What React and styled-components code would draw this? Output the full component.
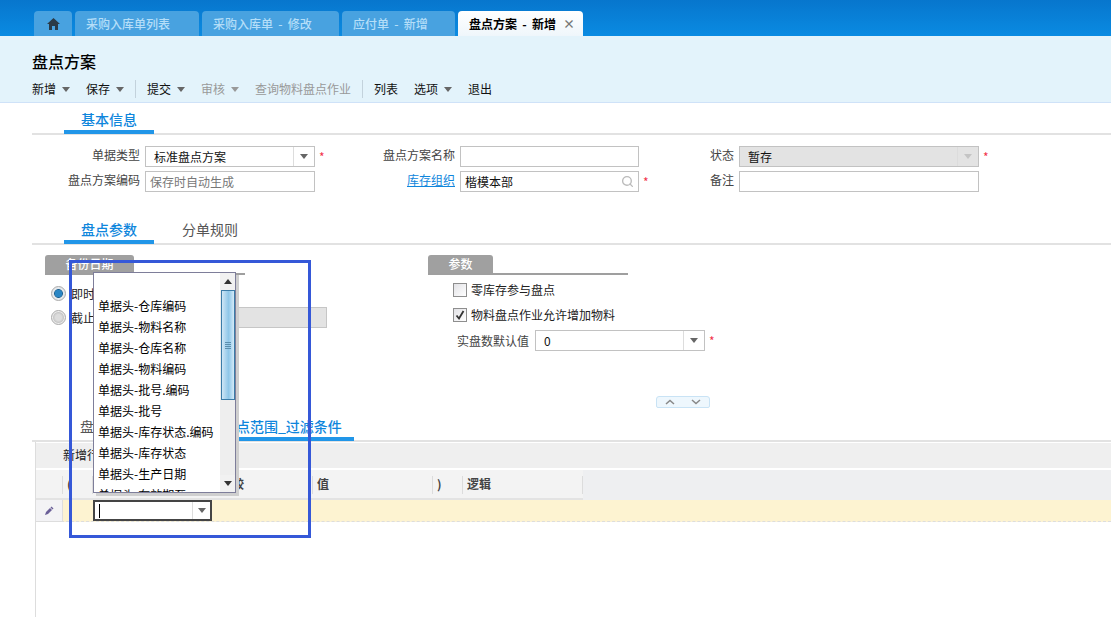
import React from 'react';
import styled, { createGlobalStyle } from 'styled-components';
import { Search } from 'lucide-react';

const Global = createGlobalStyle`
  html, body { margin: 0; padding: 0; background: #fff; }
  body { font-family: "Noto Sans CJK SC", "Liberation Sans", sans-serif; font-size: 12px; color: #333; }
`;
const Page = styled.div`position: relative; width: 1111px; height: 617px; overflow: hidden; display: flex; flex-direction: column; background: #fff;`;
const TabBar = styled.div`height: 36px; flex: none; display: flex; align-items: flex-end; gap: 3px; padding-left: 34px; box-sizing: border-box; background: linear-gradient(#0776cd, #0a8be2);`;
const PageTab = styled.div`
  width: ${p => p.$w}px; height: 25px; display: flex; align-items: center; box-sizing: border-box; padding: 0 0 0 11px; white-space: pre; word-spacing: 2.5px;
  border-radius: 4px 4px 0 0; background: #48a2e0; color: #b5def8; line-height: 25px; font-weight: 500;
`;
const HomeTab = styled(PageTab)`padding: 0; justify-content: center;`;
const ActiveTab = styled(PageTab)`background: linear-gradient(#fff, #eff6fb); color: #000; padding-right: 8px; font-weight: 700;`;
const CloseMark = styled.span`margin-left: auto; color: #777; font-size: 12px; font-weight: 700;`;
const Head = styled.header`height: 67px; flex: none; box-sizing: border-box; background: #e3f3fb; border-bottom: 1px solid #cfe2f8; padding: 15px 0 0 32px;`;
const Title = styled.h1`margin: 0; font-size: 16px; line-height: 20px; font-weight: 500; color: #000;`;
const Toolbar = styled.div`display: flex; align-items: center; gap: 16px; margin-top: 8px; height: 20px;`;
const ToolItem = styled.div`display: flex; align-items: center; gap: 6px; color: ${p => (p.$off ? '#999' : '#111')}; line-height: 20px;`;
const ToolSep = styled.i`width: 1px; height: 18px; background: #c3d2dc; margin: 0 -5px;`;
const Caret = styled.i`width: 0; height: 0; flex: none; border: 4px solid transparent; border-top: 5px solid ${p => p.$color || '#666'}; border-bottom: 0; display: block;`;
const Tabs = styled.div`flex: none; display: flex; align-items: flex-end; box-sizing: border-box; height: ${p => p.$h}px; margin: ${p => p.$mt}px 0 0 32px; padding-left: ${p => p.$pl ?? 32}px; border-bottom: 2px solid #e2e2e2;`;
const SecTab = styled.div`
  width: ${p => p.$w}px; height: 26px; box-sizing: border-box; text-align: ${p => p.$align || 'center'}; padding-left: ${p => p.$pad || 0}px; line-height: 22px; font-size: 14px; margin-bottom: -1px;
  color: ${p => (p.$active ? '#0f86dc' : '#555')}; font-weight: ${p => (p.$active ? 500 : 400)};
  border-bottom: 4px solid ${p => (p.$active ? '#2196e8' : 'transparent')}; white-space: nowrap;
`;
const FormGrid = styled.div`flex: none; display: grid; grid-template-columns: 140px 170px 135px 179px 90px 240px; grid-auto-rows: 21px; column-gap: 5px; row-gap: 4px; margin-top: 11px; height: 46px;`;
const Label = styled.label`text-align: right; line-height: 18px; color: ${p => (p.$link ? '#0f86dc' : '#444')}; text-decoration: ${p => (p.$link ? 'underline' : 'none')};`;
const Input = styled.div`
  position: relative; display: flex; align-items: center; box-sizing: border-box; height: 21px; border: 1px solid #c2c2c2; padding-left: ${p => p.$pad || 8}px; flex: none;
  ${p => (p.$w ? `width: ${p.$w}px;` : '')}
  background: ${p => (p.$off ? '#e3e3e3' : '#fff')}; color: ${p => (p.$hint ? '#777' : '#111')};
`;
const Star = styled.span`position: absolute; left: calc(100% + 5px); top: 0; color: #f2334b; font-size: 12px; line-height: 20px;`;
const DropBtn = styled.span`margin-left: auto; width: 20px; height: 100%; border-left: 1px solid ${p => (p.$off ? '#dcdcdc' : '#ddd')}; display: flex; align-items: center; justify-content: center;`;
const SearchBtn = styled.span`margin-left: auto; width: 22px; display: flex; justify-content: center; color: #bbb;`;
const Params = styled.div`flex: none; height: 141px; margin-top: 10px; display: flex;`;
const Group = styled.section`width: 200px; margin-left: ${p => p.$ml}px; display: flex; flex-direction: column;`;
const GroupHead = styled.div`height: 18px; box-sizing: content-box; border-bottom: 2px solid #9f9f9f;`;
const GroupLabel = styled.div`width: ${p => p.$w}px; height: 18px; background: #a0a0a0; border-radius: 3px 3px 0 0; color: #fff; text-align: center; line-height: 18px; font-weight: 500;`;
const RadioLine = styled.div`display: flex; align-items: center; height: 24px; margin-left: 6px; gap: 5px; color: #222; white-space: nowrap;`;
const RadioList = styled.div`margin-top: 6px; display: flex; flex-direction: column;`;
const Radio = styled.i`width: 15px; height: 15px; box-sizing: border-box; border-radius: 50%; flex: none; border: 1px solid #aaa; background: ${p => (p.$on ? 'radial-gradient(circle, #2a86c4 0 3.5px, #1c5f8f 4px, #e4e8ec 4.8px)' : 'radial-gradient(circle, #dcdcdc 0 3px, #c8c8c8 5px, #eee 6px)')};`;
const DisabledDate = styled.div`flex: none; width: 230px; height: 21px; box-sizing: border-box; background: #e3e3e3; border: 1px solid #c6c6c6; margin-left: -3px;`;
const CheckList = styled.div`margin: 7px 0 0 25px; display: flex; flex-direction: column; gap: 10px; width: 300px;`;
const CheckLine = styled.div`display: flex; align-items: center; gap: 4px; height: 15px; color: #222; white-space: nowrap;`;
const Check = styled.i`width: 14px; height: 14px; box-sizing: border-box; border: 1px solid #8e8e8e; background: linear-gradient(135deg, #e2e2e6, #fff); display: flex; align-items: center; justify-content: center;`;
const DefaultRow = styled.div`display: flex; align-items: center; gap: 6px; margin: 8px 0 0 29px; white-space: nowrap; color: #444;`;
const CollapseRow = styled.div`flex: none; height: 12px; padding-left: 656px;`;
const Collapse = styled.div`width: 54px; height: 12px; box-sizing: border-box; border: 1px solid #c9e3f5; border-radius: 3px 3px 2px 2px; background: #eef7fd; display: flex; align-items: center; justify-content: space-around; color: #888;`;
const GridArea = styled.div`flex: 1; margin-left: 35px; border-left: 1px solid #ddd; display: flex; flex-direction: column;`;
const GridTools = styled.div`height: 25px; margin-top: 1px; background: #efefef; line-height: 24px; padding-left: 27px; color: #222; flex: none;`;
const GridHead = styled.div`height: 30px; margin-top: 2px; flex: none; display: flex; background: #eeeff1;`;
const HeadCell = styled.div`width: ${p => p.$w}px; box-sizing: border-box; background: #f3f3f3; border-bottom: 2px solid #e3e3e3; font-weight: 700; line-height: 28px; padding-left: 4px; color: #444; position: relative; &::after { content: ""; position: absolute; right: 0; top: 6px; height: 18px; width: 1px; background: #dcdcdc; }`;
const GridRow = styled.div`height: 22px; flex: none; display: flex; background: #fdf3d1; border-bottom: 1px dashed #ddd; box-sizing: border-box;`;
const RowMark = styled.div`width: 27px; background: #f3f3f5; border-right: 1px solid #ddd; border-bottom: 1px solid #ddd; box-sizing: border-box; display: flex; align-items: center; justify-content: center; height: 22px;`;
const CellEditor = styled.div`position: absolute; left: 93px; top: 500px; width: 119px; height: 21px; box-sizing: border-box; border: 2px solid #444; background: #fff; display: flex; align-items: center; padding-left: 4px;`;
const Cursor = styled.i`width: 1px; height: 14px; background: #000;`;
const EditorBtn = styled.span`margin-left: auto; width: 17px; height: 100%; border-left: 1px solid #ddd; display: flex; align-items: center; justify-content: center;`;
const Popup = styled.div`position: absolute; left: 93px; top: 272px; width: 143px; height: 221px; box-sizing: border-box; background: #fff; border: 1px solid #7e7e9a; box-shadow: 3px 3px 0 #cfcfcf; display: flex; overflow: hidden;`;
const PopupList = styled.div`flex: 1; padding: 22px 0 0 4px; overflow: hidden;`;
const PopupItem = styled.div`height: 21px; line-height: 21px; color: #000; white-space: nowrap;`;
const Scroll = styled.div`width: 15px; flex: none; background: #eee; display: flex; flex-direction: column; align-items: center; position: relative;`;
const ScrollBtn = styled.div`height: 17px; width: 100%; display: flex; align-items: center; justify-content: center; background: #f1f1f1; &:last-child { margin-top: auto; }`;
const Thumb = styled.div`width: 14px; height: 110px; box-sizing: border-box; border: 1px solid #3b7ca8; background: linear-gradient(90deg, #cfe6f5, #8ec6e8 55%, #d5ebf8); display: flex; align-items: center; justify-content: center;`;
const Grip = styled.div`width: 6px; height: 7px; background: repeating-linear-gradient(#5b8fae 0 1px, transparent 1px 2px);`;
const UpCaret = styled.i`width: 0; height: 0; border: 4px solid transparent; border-bottom: 5px solid #333; border-top: 0; display: block;`;
const Annotation = styled.div`position: absolute; left: 69px; top: 260px; width: 242px; height: 278px; box-sizing: border-box; border: 3px solid #3558d8; pointer-events: none;`;

const items = ['单据头-仓库编码', '单据头-物料名称', '单据头-仓库名称', '单据头-物料编码', '单据头-批号.编码', '单据头-批号', '单据头-库存状态.编码', '单据头-库存状态', '单据头-生产日期', '单据头-有效期至'];
const cols = [['', 27], ['(', 30], ['字段', 123], ['比较', 97], ['值', 120], [')', 30], ['逻辑', 120]];
const Tool = ({ children, off, caret }) => <ToolItem $off={off}>{children}{caret && <Caret $color={off ? '#999' : '#666'} />}</ToolItem>;

export default function App() {
  return (
    <Page>
      <Global />
      <TabBar>
        <HomeTab $w={38}><svg width="13" height="12" viewBox="0 0 13 12"><path d="M6.5 0 0 6h2v6h3V8h3v4h3V6h2z" fill="#2b3a46" /></svg></HomeTab>
        <PageTab $w={124}>采购入库单列表</PageTab>
        <PageTab $w={137}>采购入库单 - 修改</PageTab>
        <PageTab $w={113}>应付单 - 新增</PageTab>
        <ActiveTab $w={125}>盘点方案 - 新增<CloseMark>×</CloseMark></ActiveTab>
      </TabBar>
      <Head>
        <Title>盘点方案</Title>
        <Toolbar>
          <Tool caret>新增</Tool><Tool caret>保存</Tool><ToolSep />
          <Tool caret>提交</Tool><Tool caret off>审核</Tool><Tool off>查询物料盘点作业</Tool><ToolSep />
          <Tool>列表</Tool><Tool caret>选项</Tool><Tool>退出</Tool>
        </Toolbar>
      </Head>
      <Tabs $h={32} $mt={0}><SecTab $w={90} $active>基本信息</SecTab></Tabs>
      <FormGrid>
        <Label>单据类型</Label>
        <Input>标准盘点方案<DropBtn><Caret /></DropBtn><Star>*</Star></Input>
        <Label>盘点方案名称</Label>
        <Input />
        <Label>状态</Label>
        <Input $off>暂存<DropBtn $off><Caret $color="#c4c4c4" /></DropBtn><Star>*</Star></Input>
        <Label>盘点方案编码</Label>
        <Input $pad={4} $hint>保存时自动生成</Input>
        <Label $link>库存组织</Label>
        <Input $pad={4}>楷模本部<SearchBtn><Search size={13} strokeWidth={2.5} /></SearchBtn><Star>*</Star></Input>
        <Label>备注</Label>
        <Input />
      </FormGrid>
      <Tabs $h={53} $mt={0}>
        <SecTab $w={90} $active>盘点参数</SecTab>
        <SecTab $w={112}>分单规则</SecTab>
      </Tabs>
      <Params>
        <Group $ml={45}>
          <GroupHead><GroupLabel $w={89}>备份日期</GroupLabel></GroupHead>
          <RadioList>
            <RadioLine><Radio $on />即时</RadioLine>
            <RadioLine><Radio />截止<DisabledDate /></RadioLine>
          </RadioList>
        </Group>
        <Group $ml={183}>
          <GroupHead><GroupLabel $w={65}>参数</GroupLabel></GroupHead>
          <CheckList>
            <CheckLine><Check />零库存参与盘点</CheckLine>
            <CheckLine>
              <Check><svg width="10" height="10" viewBox="0 0 10 10"><path d="M1.5 5.5 4 8.5 8.5 1" fill="none" stroke="#333" strokeWidth="1.8" /></svg></Check>
              物料盘点作业允许增加物料
            </CheckLine>
          </CheckList>
          <DefaultRow>实盘数默认值
            <Input $w={170}>0<DropBtn><Caret /></DropBtn><Star>*</Star></Input>
          </DefaultRow>
        </Group>
      </Params>
      <CollapseRow>
        <Collapse>
          <svg width="10" height="6" viewBox="0 0 10 6"><path d="M1 5 5 1.5 9 5" fill="none" stroke="#888" strokeWidth="1.5" /></svg>
          <svg width="10" height="6" viewBox="0 0 10 6"><path d="M1 1 5 4.5 9 1" fill="none" stroke="#888" strokeWidth="1.5" /></svg>
        </Collapse>
      </CollapseRow>
      <Tabs $h={25} $mt={9} $pl={16}>
        <SecTab $w={138} $align="left" $pad={32}>盘点范围_组织</SecTab>
        <SecTab $w={168} $active $align="left" $pad={36}>盘点范围_过滤条件</SecTab>
      </Tabs>
      <GridArea>
        <GridTools>新增行</GridTools>
        <GridHead>
          {cols.map(([t, w], i) => <HeadCell key={i} $w={w}>{t}</HeadCell>)}
        </GridHead>
        <GridRow>
          <RowMark><svg width="10" height="10" viewBox="0 0 10 10"><path d="M1 9 2 6 6 2 8 4 4 8z" fill="#6a5f97" /><path d="M7 1 9 3" stroke="#6a5f97" strokeWidth="1.4" /></svg></RowMark>
        </GridRow>
      </GridArea>
      <CellEditor><Cursor /><EditorBtn><Caret /></EditorBtn></CellEditor>
      <Popup>
        <PopupList>{items.map(t => <PopupItem key={t}>{t}</PopupItem>)}</PopupList>
        <Scroll>
          <ScrollBtn><UpCaret /></ScrollBtn>
          <Thumb><Grip /></Thumb>
          <ScrollBtn><Caret $color="#333" /></ScrollBtn>
        </Scroll>
      </Popup>
      <Annotation />
    </Page>
  );
}
